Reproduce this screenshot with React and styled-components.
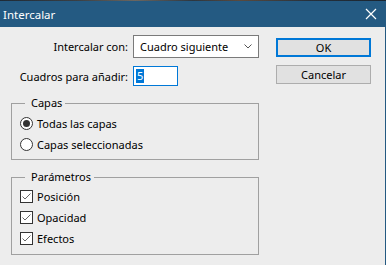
import React from "react";
import styled, { createGlobalStyle } from "styled-components";

const Global = createGlobalStyle`
  html, body { margin: 0; padding: 0; background: #ededed; }
  body { font-family: "Noto Sans", "Open Sans", sans-serif; font-size: 11px; color: #000; }
`;

const Window = styled.div`
  width: 386px;
  height: 265px;
  display: flex;
  flex-direction: column;
  background: #ededed;
  overflow: hidden;
`;

const TopStrip = styled.div`
  height: 1px;
  background: linear-gradient(90deg, #1e2a36 0%, #3a3f44 20%, #6b6660 35%, #2c3640 50%, #5a4a3e 62%, #26313c 80%, #1a2530 100%);
`;

const TitleBar = styled.div`
  height: 26px;
  background: #245a82;
  display: flex;
  align-items: center;
  justify-content: space-between;
  padding: 0 9px 0 3px;
  color: #fff;
  font-size: 11.5px;
`;

const Close = styled.svg`
  width: 12px;
  height: 12px;
  display: block;
`;

const Body = styled.div`
  flex: 1;
  display: flex;
  border-right: 1px solid #245a82;
`;

const Left = styled.div`
  width: 260px;
  box-sizing: border-box;
  padding: 8px 0 0 11px;
  display: flex;
  flex-direction: column;
`;

const Form = styled.div`
  display: grid;
  grid-template-columns: 117px auto;
  column-gap: 5px;
  row-gap: 8px;
  align-items: center;
  margin-bottom: 10px;
`;

const Label = styled.label`
  text-align: right;
  white-space: nowrap;
`;

const Select = styled.div`
  width: 126px;
  height: 23px;
  box-sizing: border-box;
  border: 1px solid #7a7a7a;
  background: #fff;
  display: flex;
  align-items: center;
  justify-content: space-between;
  padding: 0 6px 0 6px;
`;

const Input = styled.div`
  width: 45px;
  height: 20px;
  box-sizing: border-box;
  border: 1px solid #0078d7;
  background: #fff;
  display: flex;
  align-items: center;
  padding-left: 2px;
`;

const Selected = styled.span`
  background: #0078d7;
  color: #fff;
  line-height: 14px;
  padding: 0 1px;
`;

const Group = styled.fieldset`
  width: 248px;
  box-sizing: border-box;
  margin: 0 0 ${(p) => p.$mb || 0}px 0;
  padding: ${(p) => p.$pt}px 0 0 8px;
  border: 1px solid #a0a0a0;
  height: ${(p) => p.$h}px;
  display: flex;
  flex-direction: column;
  gap: ${(p) => p.$gap}px;
`;

const Legend = styled.legend`
  margin-left: 5px;
  padding: 0 3px 0 6px;
  line-height: 14px;
`;

const Option = styled.div`
  display: flex;
  align-items: center;
  gap: 4px;
  height: 15px;
`;

const Radio = styled.span`
  width: 13px;
  height: 13px;
  box-sizing: border-box;
  border-radius: 50%;
  border: 1px solid #333;
  background: #fff;
  display: flex;
  align-items: center;
  justify-content: center;
  &::after {
    content: "";
    width: 7px;
    height: 7px;
    border-radius: 50%;
    background: ${(p) => (p.$on ? "#333" : "transparent")};
  }
`;

const Check = styled.span`
  width: 13px;
  height: 13px;
  box-sizing: border-box;
  border: 1px solid #333;
  background: #fff;
  display: flex;
  align-items: center;
  justify-content: center;
`;

const Right = styled.div`
  flex: 1;
  padding: 11px 0 0 16px;
  display: flex;
  flex-direction: column;
  gap: 8px;
`;

const Button = styled.div`
  width: 95px;
  height: 19px;
  box-sizing: border-box;
  background: #e1e1e1;
  border: ${(p) => (p.$primary ? "2px solid #0078d7" : "1px solid #adadad")};
  display: flex;
  align-items: center;
  justify-content: center;
`;

const Tick = () => (
  <svg width="11" height="11" viewBox="0 0 11 11">
    <path d="M1.5 5.5 L4 8 L9.5 2.5" fill="none" stroke="#666" strokeWidth="1" />
  </svg>
);

export default function App() {
  return (
    <Window>
      <Global />
      <TopStrip />
      <TitleBar>
        <span>Intercalar</span>
        <Close viewBox="0 0 12 12">
          <path d="M1 1 L11 11 M11 1 L1 11" stroke="#fff" strokeWidth="1.2" />
        </Close>
      </TitleBar>
      <Body>
        <Left>
          <Form>
            <Label>Intercalar con:</Label>
            <Select>
              <span>Cuadro siguiente</span>
              <svg width="8" height="5" viewBox="0 0 8 5">
                <path d="M0.5 0.5 L4 4 L7.5 0.5" fill="none" stroke="#555" strokeWidth="1" />
              </svg>
            </Select>
            <Label>Cuadros para añadir:</Label>
            <Input>
              <Selected>5</Selected>
            </Input>
          </Form>
          <Group $h={64} $pt={6} $gap={6} $mb={10}>
            <Legend>Capas</Legend>
            <Option>
              <Radio $on />
              <span>Todas las capas</span>
            </Option>
            <Option>
              <Radio />
              <span>Capas seleccionadas</span>
            </Option>
          </Group>
          <Group $h={85} $pt={5} $gap={6}>
            <Legend>Parámetros</Legend>
            <Option>
              <Check><Tick /></Check>
              <span>Posición</span>
            </Option>
            <Option>
              <Check><Tick /></Check>
              <span>Opacidad</span>
            </Option>
            <Option>
              <Check><Tick /></Check>
              <span>Efectos</span>
            </Option>
          </Group>
        </Left>
        <Right>
          <Button $primary>OK</Button>
          <Button>Cancelar</Button>
        </Right>
      </Body>
    </Window>
  );
}
